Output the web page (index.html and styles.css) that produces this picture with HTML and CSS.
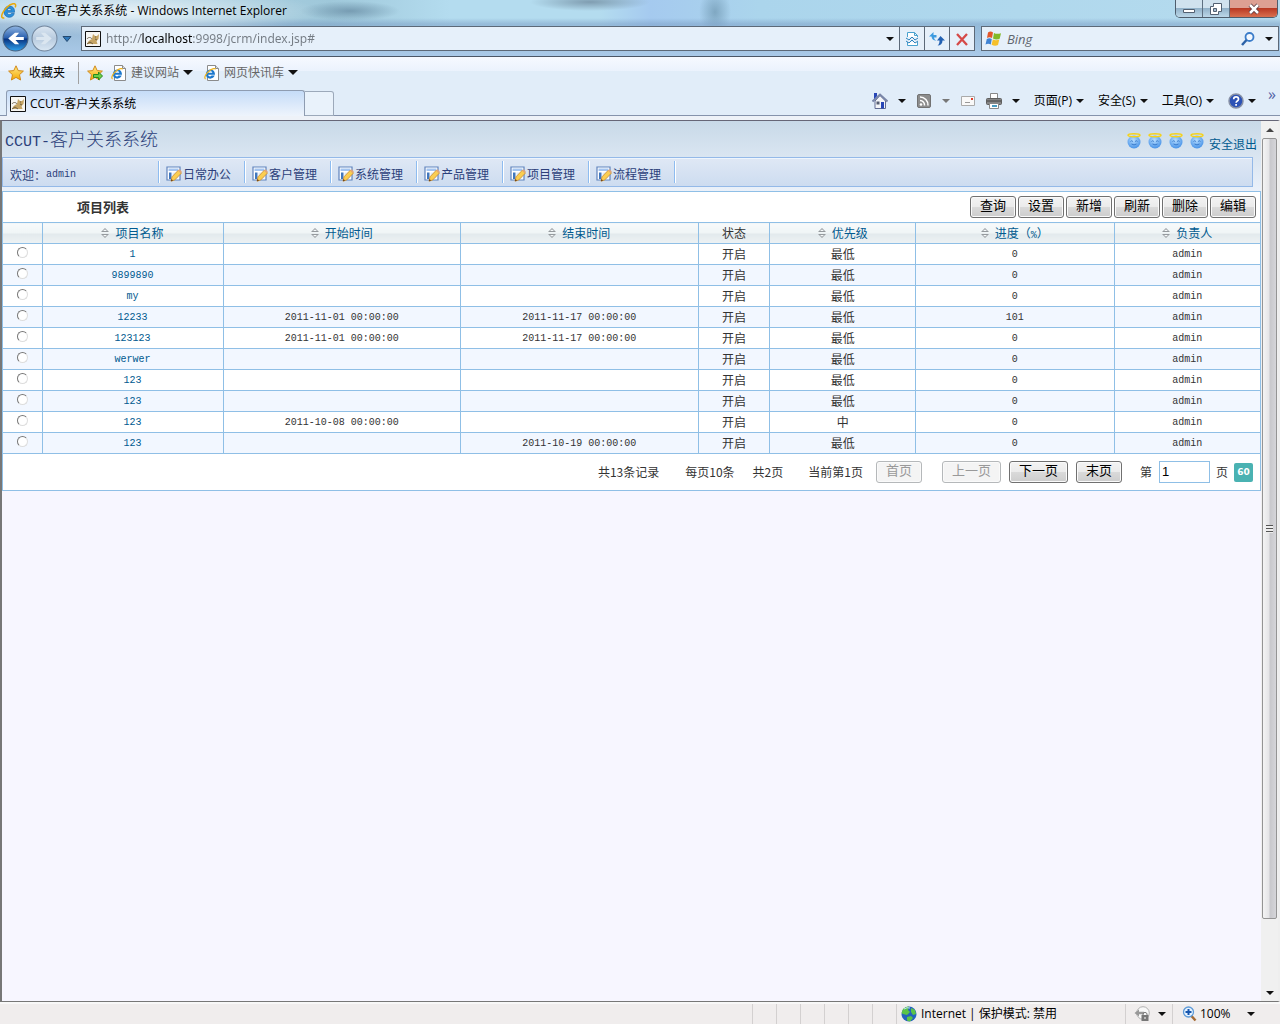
FILE: index.html
```html
<!DOCTYPE html>
<html lang="zh-CN">
<head>
    <meta charset="UTF-8">
    <meta name="viewport" content="width=device-width, initial-scale=1">
    <title>CCUT-客户关系系统</title>
    <link rel="stylesheet" href="styles.css">
</head>
<body>
    <svg class="sprite" aria-hidden="true">
        <defs>
            <linearGradient id="gold" x1="0" y1="0" x2="0" y2="1"><stop offset="0" stop-color="#ffe98a"/><stop offset="1" stop-color="#f5a800"/></linearGradient>
            <linearGradient id="navy" x1="0" y1="0" x2="0" y2="1"><stop offset="0" stop-color="#8fb5e2"/><stop offset=".48" stop-color="#2a5fae"/><stop offset=".52" stop-color="#08327f"/><stop offset="1" stop-color="#2fa2ee"/></linearGradient>
            <linearGradient id="pale" x1="0" y1="0" x2="0" y2="1"><stop offset="0" stop-color="#dce7f2"/><stop offset=".5" stop-color="#b8cbdf"/><stop offset="1" stop-color="#dbe8f4"/></linearGradient>
            <radialGradient id="face" cx=".45" cy=".35" r=".7"><stop offset="0" stop-color="#b5dcff"/><stop offset="1" stop-color="#3f8de6"/></radialGradient>
        </defs>
        <symbol id="ie" viewBox="0 0 16 16">
            <path d="M13.500 9.300H6.100c.1 1.500 1.100 2.300 2.400 2.300.9 0 1.500-.4 1.900-1.100h2.900c-.7 2.400-2.500 3.800-4.900 3.800-3.200 0-5.400-2.300-5.400-5.500s2.200-5.700 5.400-5.700c3.500 0 5.400 2.400 5.100 6.200zM6.200 7.400h4.100c-.1-1.200-.8-2-2-2s-1.900.8-2.100 2z" fill="#2a8fdc" stroke="#1262a8" stroke-width=".6"/>
            <path d="M3.300 14.800C.5 15.700-.2 13 2.100 9.200 4.400 5.300 8.700 1.600 12 .8c2.500-.6 3.200 1.200 2.200 3.600" fill="none" stroke="#e8a90c" stroke-width="1.500"/>
        </symbol>
        <symbol id="iepage" viewBox="0 0 16 16">
            <path d="M3.500.5h8l3 3v12h-11z" fill="#fff" stroke="#8b8b8b"/>
            <path d="M11.500.5v3h3" fill="#ddd" stroke="#8b8b8b"/>
            <path d="M11 9.800H4.200c.2 1.700 2.300 2.300 3.300.8h3.200c-1.400 4.400-9 4.100-8.800-1.500C2.100 3.200 11.200 2.800 11 9.800zM4.300 7.700h4c-.4-1.900-3.500-2-4 0z" fill="#1c78cd"/>
            <path d="M1.600 14C-.6 13 2 8 6.500 5c2-1.300 4.700-2.300 4.700-.5" fill="none" stroke="#f0b41c" stroke-width="1.200"/>
        </symbol>
        <symbol id="cat" viewBox="0 0 16 16">
            <path d="M.5.5h15v15H.5z" fill="#f7f6f2" stroke="#111"/>
            <path d="M2 13c1-3 3-4 5-5l1-5 2 2h2l2-2-.5 5-2 2 1 3H2z" fill="#c6a565"/>
            <path d="M2 8c1-2 4-2 5 0M2 13l3-2 3 2M10 6h1M10 8l2 1" fill="none" stroke="#5d513a" stroke-width=".8"/>
        </symbol>
        <symbol id="star" viewBox="0 0 16 16">
            <path d="M8 .8l2.200 4.800 5.200.5-3.900 3.600 1.100 5.300L8 12.400 3.400 15l1.100-5.300L.6 6.100l5.200-.5z" fill="url(#gold)" stroke="#d18a1c"/>
        </symbol>
        <symbol id="addstar" viewBox="0 0 16 16">
            <use href="#star"/>
            <path d="M6.500 9.500h5V7l4 4-4 4v-2.500h-5z" fill="#6cce48" stroke="#278a1c"/>
        </symbol>
        <symbol id="home" viewBox="0 0 16 16">
            <path d="M3 8v7.500h10.500V8L8 2.500z" fill="#f4f5f8" stroke="#606b91"/>
            <path d="M.5 8.500L8 1.500l7.500 7" fill="none" stroke="#7a86a8" stroke-width="2"/>
            <path d="M2 0h3v3L2 6zM9 9h3v6.500H9z" fill="#2746b6"/><path d="M4.500 8.500h3v3h-3z" fill="#555d70"/>
        </symbol>
        <symbol id="rss" viewBox="0 0 16 16">
            <rect x="1.500" y="1.500" width="13" height="13" rx="1.500" fill="#8d8d8d" stroke="#727272"/>
            <circle cx="5" cy="11.500" r="1.300" fill="#fff"/>
            <path d="M4 7.500a4.500 4.500 0 0 1 4.500 5M4 4a8 8 0 0 1 8 8.500" fill="none" stroke="#fff" stroke-width="1.500"/>
        </symbol>
        <symbol id="mail" viewBox="0 0 16 16">
            <path d="M1.500 3.500h13v9h-13z" fill="#f9f9f9" stroke="#aaa"/><path d="M11 5h2v2h-2z" fill="#e23d2b"/><path d="M5 9.500h5" stroke="#999"/>
        </symbol>
        <symbol id="printer" viewBox="0 0 16 16">
            <path d="M4.500.5h7v5h-7z" fill="#fff" stroke="#888"/>
            <rect x=".5" y="5.500" width="15" height="6" rx="1" fill="#858585" stroke="#5f5f5f"/>
            <path d="M1 8h14" stroke="#444"/><path d="M3.500 10.500h9v5h-9z" fill="#fff" stroke="#888"/><path d="M6 12h5v2H6z" fill="#4a9cc2"/>
        </symbol>
        <symbol id="help" viewBox="0 0 16 16">
            <circle cx="8" cy="8" r="7" fill="#2c52b5" stroke="#8790a5" stroke-width="1.500"/>
            <path d="M5.700 6.200c0-3 4.800-3 4.800 0 0 1.800-2.400 1.700-2.400 3.500M8.100 11v1.800" fill="none" stroke="#fff" stroke-width="1.700"/>
        </symbol>
        <symbol id="compat" viewBox="0 0 16 16">
            <path d="M3.500 6V1.500h7l3 3V6M3.500 11v3.500h10V11M10.500 1.500v3h3" fill="#fff" stroke="#4aa2cf"/>
            <path d="M2 7l3 2 3-3 3 3 3-2M2 10l3 2 3-3 3 3 3-2" fill="none" stroke="#2e83bd"/>
        </symbol>
        <symbol id="refresh" viewBox="0 0 16 16">
            <path d="M0 5.500L4.500 1v3h3v2.500H5c.2 1.500 1 2.500 2.500 3-2.800.3-4.700-1-5-4z" fill="#3e9be0"/>
            <path d="M16 9.500L11.500 5 8 9.500h2.500c0 2.500-.5 4-2 5 3 0 5-1.800 5-5z" fill="#2462b3"/>
        </symbol>
        <symbol id="stop" viewBox="0 0 16 16">
            <path d="M3 3l10 11M13 3L3 14" stroke="#d54a48" stroke-width="2.300"/>
        </symbol>
        <symbol id="flag" viewBox="0 0 16 16">
            <path d="M3 1.500q2.500-1.800 5 0l-1 5.500q-2.500-1.500-5 0z" fill="#e4572a"/><path d="M9 2q3 1.600 7 .2l-1.300 5.500q-3.500 1.500-6.700-.2z" fill="#83b927"/>
            <path d="M1.800 8q2.500-1.500 5 0l-1 5.500q-2.500-1.500-5.300 0z" fill="#3f83d4"/><path d="M7.800 8.500q3 1.600 6.500 0L13 14q-3 1.500-6.400-.2z" fill="#f5c02c"/>
        </symbol>
        <symbol id="search" viewBox="0 0 16 16">
            <circle cx="9.500" cy="6" r="4" fill="#f2f8ff" stroke="#3a7cc9" stroke-width="1.800"/><path d="M6.500 9L2 14" stroke="#2c62a7" stroke-width="2.500"/>
        </symbol>
        <symbol id="edit" viewBox="0 0 16 16">
            <path d="M1 1h13v13H1z" fill="#fff" stroke="#5f83bd" stroke-width="1.200"/>
            <path d="M2.500 2.500h10v2.500h-10z" fill="#a3c4f0"/><path d="M3 6.500h2.500V13H3z" fill="#4177bd"/><path d="M6.500 6.500h6v6h-6z" fill="#e1eaf5"/>
            <path d="M5 15.200l1-4.400L12.500 4l3 3-6.800 7z" fill="#fbce50" stroke="#c98a30" stroke-width=".8"/><path d="M12 4.500l1.500-1.200 2.300 2.300L14.300 7z" fill="#e3a577"/><path d="M5 15.200l.6-2.200 1.400 1.500z" fill="#5a3310"/>
        </symbol>
        <symbol id="angel" viewBox="0 0 14 16">
            <circle cx="7" cy="9" r="6.500" fill="url(#face)"/>
            <ellipse cx="7" cy="2.300" rx="6" ry="1.500" fill="none" stroke="#f5d21b" stroke-width="1.500"/>
            <path d="M3.500 8.500q1.200-1.500 2.400 0M8.100 8.500q1.200-1.500 2.400 0M4.500 11q2.500 1.800 5 0" fill="none" stroke="#3a7bcb"/>
        </symbol>
        <symbol id="globe" viewBox="0 0 16 16">
            <circle cx="8" cy="8" r="7.500" fill="#2463bd"/><path d="M2 3q3-3 6-2.500L7 4l2 2-3 3-4-1-1.500-1zM10 2l4 2 1 4-3 1-2-3zM6 11l4-1 2 2-3 3.500-3-1z" fill="#5bc447"/><path d="M3 3q3-2 6-1" fill="none" stroke="#bfe3ff"/>
        </symbol>
        <symbol id="privacy" viewBox="0 0 16 16">
            <circle cx="9" cy="7" r="6.300" fill="#f8f8f8" stroke="#b1b1b1"/><path d="M.5 7L5 3.500v2.300h5v2.500H5v2.200z" fill="#999"/>
            <path d="M7.500 9h7v6h-7z" fill="#777"/><path d="M9 9V7.500q2-2.500 4 0V9" fill="none" stroke="#777"/><path d="M11 11v2" stroke="#fff"/>
        </symbol>
        <symbol id="zoomin" viewBox="0 0 16 16">
            <path d="M9 9.500l4.500 5" stroke="#a66b34" stroke-width="2.500"/><circle cx="6.500" cy="6" r="5" fill="#e7f3ff" stroke="#5e9bd7" stroke-width="1.300"/><path d="M3.500 6h6M6.500 3v6" stroke="#1656ae" stroke-width="2"/>
        </symbol>
        <symbol id="sort" viewBox="0 0 8 10">
            <path d="M0 4L4 0l4 4zM0 6l4 4 4-4z" fill="#959a9e"/><path d="M2 3.100L4 1.200l2 1.900zM2 6.900l2 1.900 2-1.900z" fill="#f5f8f9"/>
        </symbol>
    </svg>

    <!-- 浏览器窗口 -->
    <header class="glass">
        <div class="titlebar">
            <svg class="icon"><use href="#ie"/></svg>
            <span class="window-title">CCUT-客户关系系统 - Windows Internet Explorer</span>
            <div class="window-buttons">
                <button type="button" class="win-btn" aria-label="最小化"><svg viewBox="0 0 14 14"><path d="M1.500 7.500h11v3h-11z" fill="#fff" stroke="#526071"/></svg></button>
                <button type="button" class="win-btn" aria-label="还原"><svg viewBox="0 0 14 14"><path d="M4.500 1.500h8v8h-3v3h-8v-8h3z" fill="#fff" stroke="#526071"/><path d="M4.500 6.500h3v3h-3z" fill="#a9bfd2" stroke="#526071"/></svg></button>
                <button type="button" class="win-btn win-close" aria-label="关闭"><svg viewBox="0 0 14 14"><path d="M3 3l8 8M11 3l-8 8" stroke="#54343b" stroke-width="4"/><path d="M3 3l8 8M11 3l-8 8" stroke="#fff" stroke-width="2.500"/></svg></button>
            </div>
        </div>
        <div class="navbar">
            <div class="history">
                <button type="button" class="plain" aria-label="后退"><svg class="round" viewBox="0 0 26 26"><circle cx="13" cy="13" r="12" fill="url(#navy)" stroke="#47617f"/><path d="M21 11.500h-8l3.500-4h-4L6 13l6.500 5.500h4l-3.500-4h8z" fill="#fff"/></svg></button>
                <button type="button" class="plain" aria-label="前进"><svg class="round" viewBox="0 0 26 26"><circle cx="13" cy="13" r="12" fill="url(#pale)" stroke="#72869d"/><path d="M5 11.500h8l-3.500-4h4L20 13l-6.500 5.500h-4l3.500-4H5z" fill="#dbe6f0"/></svg></button>
                <button type="button" class="plain" aria-label="最近的页面"><svg class="recent" viewBox="0 0 10 6"><path d="M1 .5h8l-4 5z" fill="#2f78bb" stroke="#24496f"/></svg></button>
            </div>
            <div class="field address">
                <svg class="icon"><use href="#cat"/></svg>
                <input class="url" type="text" aria-label="地址" value="http://localhost:9998/jcrm/index.jsp#">
                <button type="button" class="plain arrow-btn" aria-label="显示地址列表"><span class="arrow"></span></button>
                <button type="button" class="tool" aria-label="兼容性视图"><svg class="icon"><use href="#compat"/></svg></button>
                <button type="button" class="tool" aria-label="刷新页面"><svg class="icon"><use href="#refresh"/></svg></button>
                <button type="button" class="tool" aria-label="停止"><svg class="icon"><use href="#stop"/></svg></button>
            </div>
            <div class="field searchbox">
                <svg class="icon"><use href="#flag"/></svg>
                <input class="bing" type="text" aria-label="搜索" placeholder="Bing">
                <button type="button" class="plain" aria-label="搜索"><svg class="icon"><use href="#search"/></svg></button>
                <button type="button" class="plain arrow-btn" aria-label="搜索选项"><span class="arrow"></span></button>
            </div>
        </div>
    </header>

    <div class="favorites">
        <button type="button" class="plain fav-main"><svg class="icon"><use href="#star"/></svg>收藏夹</button>
        <button type="button" class="plain" aria-label="添加到收藏夹栏"><svg class="icon"><use href="#addstar"/></svg></button>
        <button type="button" class="plain fav-link"><svg class="icon"><use href="#iepage"/></svg>建议网站<span class="arrow big"></span></button>
        <button type="button" class="plain fav-link"><svg class="icon"><use href="#iepage"/></svg>网页快讯库<span class="arrow big"></span></button>
    </div>

    <div class="tabs">
        <button type="button" class="tab"><svg class="icon"><use href="#cat"/></svg>CCUT-客户关系系统</button>
        <button type="button" class="new-tab" aria-label="新选项卡"></button>
        <div class="commands">
            <button type="button" class="plain" aria-label="主页"><svg class="icon"><use href="#home"/></svg><span class="arrow"></span></button>
            <button type="button" class="plain" aria-label="源"><svg class="icon"><use href="#rss"/></svg><span class="arrow gray"></span></button>
            <button type="button" class="plain" aria-label="阅读邮件"><svg class="icon"><use href="#mail"/></svg></button>
            <button type="button" class="plain" aria-label="打印"><svg class="icon"><use href="#printer"/></svg><span class="arrow"></span></button>
            <button type="button" class="plain word">页面(P)<span class="arrow"></span></button>
            <button type="button" class="plain word">安全(S)<span class="arrow"></span></button>
            <button type="button" class="plain word">工具(O)<span class="arrow"></span></button>
            <button type="button" class="plain word" aria-label="帮助"><svg class="icon"><use href="#help"/></svg><span class="arrow"></span></button>
            <button type="button" class="plain more" aria-label="更多">»</button>
        </div>
    </div>

    <div class="viewport">
        <main class="page">
            <div class="banner">
                <div class="banner-top">
                    <h1><span class="latin">CCUT-</span>客户关系系统</h1>
                    <div class="skins">
                        <svg class="angel"><use href="#angel"/></svg>
                        <svg class="angel"><use href="#angel"/></svg>
                        <svg class="angel"><use href="#angel"/></svg>
                        <svg class="angel"><use href="#angel"/></svg>
                        <a href="#" class="logout">安全退出</a>
                    </div>
                </div>
                <nav class="menu">
                    <span class="welcome">欢迎：<span class="latin">admin</span></span>
                    <a href="#"><svg class="icon"><use href="#edit"/></svg>日常办公</a>
                    <a href="#"><svg class="icon"><use href="#edit"/></svg>客户管理</a>
                    <a href="#"><svg class="icon"><use href="#edit"/></svg>系统管理</a>
                    <a href="#"><svg class="icon"><use href="#edit"/></svg>产品管理</a>
                    <a href="#"><svg class="icon"><use href="#edit"/></svg>项目管理</a>
                    <a href="#"><svg class="icon"><use href="#edit"/></svg>流程管理</a>
                </nav>
            </div>

            <div class="list">
                <div class="list-head">
                    <h2>项目列表</h2>
                    <div class="actions">
                        <button type="button" class="btn">查询</button>
                        <button type="button" class="btn">设置</button>
                        <button type="button" class="btn">新增</button>
                        <button type="button" class="btn">刷新</button>
                        <button type="button" class="btn">删除</button>
                        <button type="button" class="btn">编辑</button>
                    </div>
                </div>
                <table>
                    <colgroup>
                        <col class="c-pick"><col class="c-name"><col class="c-date"><col class="c-date"><col class="c-state"><col class="c-level"><col class="c-rate"><col class="c-owner">
                    </colgroup>
                    <thead>
                        <tr>
                            <th></th>
                            <th><a href="#"><svg class="sort"><use href="#sort"/></svg>项目名称</a></th>
                            <th><a href="#"><svg class="sort"><use href="#sort"/></svg>开始时间</a></th>
                            <th><a href="#"><svg class="sort"><use href="#sort"/></svg>结束时间</a></th>
                            <th>状态</th>
                            <th><a href="#"><svg class="sort"><use href="#sort"/></svg>优先级</a></th>
                            <th><a href="#"><svg class="sort"><use href="#sort"/></svg>进度（<span class="latin">%</span>）</a></th>
                            <th><a href="#"><svg class="sort"><use href="#sort"/></svg>负责人</a></th>
                        </tr>
                    </thead>
                    <tbody>
                        <tr><td><input type="radio" name="project" aria-label="1"></td><td class="latin"><a href="#">1</a></td><td></td><td></td><td>开启</td><td>最低</td><td class="latin">0</td><td class="latin">admin</td></tr>
                        <tr><td><input type="radio" name="project" aria-label="9899890"></td><td class="latin"><a href="#">9899890</a></td><td></td><td></td><td>开启</td><td>最低</td><td class="latin">0</td><td class="latin">admin</td></tr>
                        <tr><td><input type="radio" name="project" aria-label="my"></td><td class="latin"><a href="#">my</a></td><td></td><td></td><td>开启</td><td>最低</td><td class="latin">0</td><td class="latin">admin</td></tr>
                        <tr><td><input type="radio" name="project" aria-label="12233"></td><td class="latin"><a href="#">12233</a></td><td class="latin">2011-11-01 00:00:00</td><td class="latin">2011-11-17 00:00:00</td><td>开启</td><td>最低</td><td class="latin">101</td><td class="latin">admin</td></tr>
                        <tr><td><input type="radio" name="project" aria-label="123123"></td><td class="latin"><a href="#">123123</a></td><td class="latin">2011-11-01 00:00:00</td><td class="latin">2011-11-17 00:00:00</td><td>开启</td><td>最低</td><td class="latin">0</td><td class="latin">admin</td></tr>
                        <tr><td><input type="radio" name="project" aria-label="werwer"></td><td class="latin"><a href="#">werwer</a></td><td></td><td></td><td>开启</td><td>最低</td><td class="latin">0</td><td class="latin">admin</td></tr>
                        <tr><td><input type="radio" name="project" aria-label="123"></td><td class="latin"><a href="#">123</a></td><td></td><td></td><td>开启</td><td>最低</td><td class="latin">0</td><td class="latin">admin</td></tr>
                        <tr><td><input type="radio" name="project" aria-label="123"></td><td class="latin"><a href="#">123</a></td><td></td><td></td><td>开启</td><td>最低</td><td class="latin">0</td><td class="latin">admin</td></tr>
                        <tr><td><input type="radio" name="project" aria-label="123"></td><td class="latin"><a href="#">123</a></td><td class="latin">2011-10-08 00:00:00</td><td></td><td>开启</td><td>中</td><td class="latin">0</td><td class="latin">admin</td></tr>
                        <tr><td><input type="radio" name="project" aria-label="123"></td><td class="latin"><a href="#">123</a></td><td></td><td class="latin">2011-10-19 00:00:00</td><td>开启</td><td>最低</td><td class="latin">0</td><td class="latin">admin</td></tr>
                    </tbody>
                </table>
                <div class="pager">
                    <div class="totals"><span>共13条记录</span><span>每页10条</span></div>
                    <span>共2页</span>
                    <div class="totals"><span>当前第1页</span></div>
                    <button type="button" class="btn first" disabled>首页</button>
                    <button type="button" class="btn" disabled>上一页</button>
                    <button type="button" class="btn">下一页</button>
                    <button type="button" class="btn">末页</button>
                    <label class="jump" for="pageNo">第</label>
                    <input type="text" id="pageNo" value="1">
                    <span class="unit">页</span>
                    <button type="button" class="go">60</button>
                </div>
            </div>
        </main>
        <div class="scrollbar">
            <span class="scroll-end"><span class="arrow up"></span></span>
            <span class="thumb"><span class="grip"></span></span>
            <span class="track"></span>
            <span class="scroll-end"><span class="arrow"></span></span>
        </div>
    </div>

    <footer class="status">
        <span class="cell"></span><span class="cell"></span><span class="cell"></span><span class="cell"></span><span class="cell"></span><span class="cell"></span>
        <span class="cell zone"><svg class="icon"><use href="#globe"/></svg>Internet | 保护模式: 禁用</span>
        <button type="button" class="plain cell privacy" aria-label="隐私报告"><svg class="icon"><use href="#privacy"/></svg><span class="arrow"></span></button>
        <button type="button" class="plain cell zoom"><svg class="icon"><use href="#zoomin"/></svg>100%<span class="arrow"></span></button>
    </footer>
</body>
</html>
```

FILE: styles.css
```css
* {
    box-sizing: border-box;
}

body {
    margin: 0;
    height: 100vh;
    display: flex;
    flex-direction: column;
    overflow: hidden;
    background: #f0eded;
    color: #000;
    font: 12px/16px "Open Sans", "Noto Sans CJK SC", sans-serif;
}

button,
input {
    font: inherit;
    color: inherit;
}

a {
    color: #015a8f;
    text-decoration: none;
}

.sprite {
    position: absolute;
    width: 0;
    height: 0;
}

.icon {
    width: 16px;
    height: 16px;
    flex: none;
}

.plain {
    display: flex;
    align-items: center;
    padding: 0;
    border: 0;
    background: none;
    white-space: nowrap;
}

.arrow {
    border: 4px solid transparent;
    border-top-color: #111;
    border-bottom: 0;
}

.arrow.big {
    border-width: 5px 5px 0;
}

.arrow.gray {
    border-top-color: #777;
}

.arrow.up {
    border-top: 0;
    border-bottom: 4px solid #444;
}

/* 标题栏和地址栏 */
.glass {
    flex: none;
    border-bottom: 1px solid #4b5666;
    background:
        radial-gradient(ellipse 190px 24px at 130px 12px, rgba(255, 255, 255, .7), transparent),
        linear-gradient(to bottom, transparent 18px, rgba(120, 155, 195, .5) 24px, rgba(165, 197, 228, .9) 50px, #a9c9e8),
        radial-gradient(ellipse 60px 9px at 590px 2px, rgba(105, 130, 150, .7), transparent),
        radial-gradient(ellipse 16px 24px at 715px 12px, rgba(100, 140, 165, .6), transparent),
        radial-gradient(ellipse 50px 10px at 350px 11px, rgba(90, 125, 150, .6), transparent),
        linear-gradient(to right, #b9d8ea, #9fc8da 330px, #b4dcef 450px, #b4dcef 600px, #a5caef 650px, #abd5ec 760px, #b5dbee);
}

.titlebar {
    display: flex;
    align-items: flex-start;
    gap: 4px;
    height: 25px;
    padding-left: 1px;
}

.titlebar > .icon {
    margin-top: 3px;
}

.window-title {
    flex: 1;
    padding-top: 3px;
}

.window-buttons {
    display: flex;
    height: 18px;
    margin-right: 2px;
    border: 1px solid #4e5d6c;
    border-top: 0;
    border-radius: 0 0 5px 5px;
    overflow: hidden;
}

.win-btn {
    display: flex;
    align-items: center;
    justify-content: center;
    width: 27px;
    padding: 0;
    border: 0;
    border-right: 1px solid #5e7081;
    background: linear-gradient(#d0e2ee 45%, #92b2c9 50%, #bcd7e8);
}

.win-btn svg {
    width: 14px;
    height: 14px;
}

.win-close {
    width: 47px;
    border-right: 0;
    background: linear-gradient(#dda093 45%, #b93a24 50%, #d9704f);
}

.navbar {
    display: flex;
    gap: 6px;
    height: 31px;
    padding: 1px 1px 5px 2px;
}

.history {
    display: flex;
    align-items: center;
    gap: 2px;
    width: 73px;
}

.round {
    width: 27px;
    height: 27px;
    display: block;
}

.recent {
    width: 10px;
    height: 6px;
    margin-left: 2px;
}

.field {
    display: flex;
    align-items: center;
    border: 1px solid #5c6978;
    background: #e6f0fa;
}

.field input {
    flex: 1;
    min-width: 0;
    padding: 0;
    border: 0;
    outline: 0;
}

.address {
    flex: 1;
    padding-left: 3px;
}

/* 域名部分用黑色，其余为灰色 */
.address .url {
    margin-left: 5px;
    color: transparent;
    font: 12px/16px "Noto Sans", sans-serif;
    background: linear-gradient(to right, #747b83 35px, #000 35px, #000 86px, #747b83 86px);
    -webkit-background-clip: text;
    background-clip: text;
}

.arrow-btn {
    padding: 8px 5px;
}

.tool {
    display: flex;
    align-items: center;
    justify-content: center;
    width: 25px;
    height: 23px;
    padding: 0;
    border: 0;
    border-left: 1px solid #5c6978;
    background: none;
}

.searchbox {
    flex: none;
    width: 298px;
    padding-left: 3px;
}

.searchbox .bing {
    margin-left: 6px;
    background: none;
    font-size: 13px;
    font-style: italic;
}

.bing::placeholder {
    color: #5f666e;
}

.searchbox .arrow-btn {
    margin-left: 4px;
}

/* 收藏夹栏 */
.favorites {
    flex: none;
    display: flex;
    align-items: center;
    gap: 8px;
    height: 31px;
    padding-left: 8px;
    background: linear-gradient(#f6f9ff, #ebf2fd 14px, #e1edf9 14px);
}

.fav-main {
    gap: 5px;
    height: 22px;
    padding-right: 13px;
    border-right: 1px solid #a0a0a0;
}

.fav-link {
    gap: 4px;
    margin-right: 3px;
    color: #666;
}

/* 选项卡 */
.tabs {
    flex: none;
    display: flex;
    align-items: flex-end;
    height: 32px;
    padding-left: 6px;
    border-bottom: 4px solid #eef2f8;
    background: #e1edf9;
    box-shadow: inset 0 -1px #8593ac;
}

.tab {
    display: flex;
    align-items: center;
    gap: 4px;
    width: 299px;
    height: 26px;
    padding: 0 3px;
    border: 1px solid #8e9cb1;
    border-bottom: 0;
    border-radius: 3px 3px 0 0;
    background: linear-gradient(#c5dcf8, #eef4fc);
}

.new-tab {
    width: 29px;
    height: 25px;
    border: 1px solid #9ca9ba;
    border-left: 0;
    border-radius: 0 3px 0 0;
    background: #e9f2fb;
}

.commands {
    display: flex;
    align-items: center;
    gap: 10px;
    height: 30px;
    margin-left: auto;
    padding-right: 4px;
}

.commands .plain {
    gap: 10px;
}

.commands .word {
    gap: 4px;
    margin-left: 4px;
}

.commands .more {
    align-self: flex-start;
    margin-left: 2px;
    color: #5363a5;
    font-size: 16px;
}

/* 页面区域 */
.viewport {
    flex: 1;
    min-height: 0;
    display: flex;
    border: 2px solid #777;
    border-width: 1px 2px 1px 2px;
    border-top-color: #667;
    border-right-color: #eee;
}

.page {
    flex: 1;
    min-width: 0;
    background: #f7f6ff;
    color: #333;
    font: 12px/16px "Noto Sans CJK SC", sans-serif;
}

.latin {
    font-family: "Liberation Mono", monospace;
    font-size: 10px;
}

span.latin {
    line-height: 1;
}

.banner {
    padding-bottom: 4px;
    background: linear-gradient(#c8d9e8, #ebf1fa);
}

.banner-top {
    display: flex;
    justify-content: space-between;
    height: 36px;
    padding: 0 4px 0 3px;
}

h1 {
    margin: 0;
    color: #2c3f7a;
    font-size: 18px;
    font-weight: 300;
    line-height: 34px;
}

h1 .latin {
    font-size: 15px;
}

.skins {
    display: flex;
    gap: 7px;
    padding-top: 12px;
}

.angel {
    width: 14px;
    height: 16px;
}

.logout {
    margin-left: -2px;
    padding-top: 3px;
}

.menu {
    display: flex;
    height: 30px;
    margin-right: 8px;
    padding: 3px 0;
    border: 1px solid #94b9e8;
    background: linear-gradient(#dfe8f5, #cddcf0);
    box-shadow: inset 0 1px #eef5fd;
    color: #2c3f7a;
}

.menu > * {
    display: flex;
    align-items: center;
    width: 86px;
    height: 22px;
    border-right: 1px solid #8ebcf0;
    box-shadow: 1px 0 #fff;
    color: inherit;
}

.menu .welcome {
    width: 156px;
    padding: 5px 0 0 7px;
}

.menu a {
    gap: 1px;
    padding: 3px 0 0 7px;
}

/* 项目列表 */
.list {
    border: 1px solid #8fbfe6;
    background: #fff;
}

.list-head {
    display: flex;
    align-items: center;
    justify-content: space-between;
    height: 30px;
    padding: 0 4px 0 74px;
}

h2 {
    margin: 0;
    font-size: 13px;
    line-height: 16px;
}

.actions {
    display: flex;
    gap: 2px;
}

.btn {
    min-width: 46px;
    height: 22px;
    padding: 0 9px 4px;
    border: 1px solid #707070;
    border-radius: 3px;
    background: linear-gradient(#f3f3f3, #ebebeb 50%, #dadada 50%, #cdcdcd);
    box-shadow: inset 0 0 0 1px #fafafa;
    color: #000;
    font-size: 13px;
    line-height: 16px;
}

.btn:disabled {
    border-color: #b5b8ba;
    background: #f4f4f4;
    color: #999;
}

table {
    width: 100%;
    table-layout: fixed;
    border-collapse: collapse;
}

.c-pick { width: 39px; }
.c-name { width: 14.4%; }
.c-date { width: 18.9%; }
.c-state { width: 5.7%; }
.c-level { width: 11.6%; }
.c-rate { width: 15.8%; }

th,
td {
    height: 21px;
    padding: 0;
    border: 1px solid #8fbfe6;
    text-align: center;
    line-height: 16px;
}

td.latin {
    padding-top: 2px;
}

th:first-child,
td:first-child {
    border-left: 0;
}

th:last-child,
td:last-child {
    border-right: 0;
}

th {
    background: linear-gradient(#f7fafb, #eff5f6 50%, #e2e9ec 50%, #edf2f4);
    font-weight: normal;
}

tbody tr:nth-child(even) {
    background: #f2f7ff;
}

.sort {
    width: 8px;
    height: 10px;
    margin-right: 6px;
}

td input {
    appearance: none;
    display: block;
    width: 11px;
    height: 11px;
    margin: 0 auto 3px;
    border: 1px solid #777;
    border-right-color: #ddd;
    border-bottom-color: #ddd;
    border-radius: 50%;
    background: #fff;
}

.pager {
    display: flex;
    align-items: center;
    justify-content: flex-end;
    gap: 8px;
    height: 36px;
    padding-right: 7px;
}

.totals {
    display: flex;
    gap: 26px;
    margin: 0 5px 0 17px;
}

.totals + span {
    margin-left: 5px;
}

.pager .first {
    margin-right: 12px;
}

.jump {
    margin-left: 10px;
}

#pageNo {
    width: 51px;
    height: 22px;
    margin-left: -1px;
    padding: 0 2px 2px;
    border: 1px solid #8fbfe6;
    background: #fff;
    color: #000;
    font: 13px/16px "Liberation Sans", sans-serif;
}

.unit {
    margin: 0 -2px;
}

.go {
    width: 19px;
    height: 19px;
    padding: 0;
    border: 0;
    border-radius: 2px;
    background: #4ab2b2;
    color: #fff;
    font: bold 9px/19px "DejaVu Sans", sans-serif;
}

/* 滚动条 */
.scrollbar {
    flex: none;
    display: flex;
    flex-direction: column;
    width: 17px;
    background: #f0f0f0;
}

.scroll-end {
    display: flex;
    align-items: center;
    justify-content: center;
    height: 17px;
}

.thumb {
    flex: 12;
    display: flex;
    align-items: center;
    justify-content: center;
    margin: 0 1px;
    border: 1px solid #949494;
    border-radius: 2px;
    background: linear-gradient(to right, #f4f4f4, #e5e5e7 45%, #c8c8cc 55%, #d5d5d9);
}

.track {
    flex: 1;
}

.grip {
    width: 7px;
    height: 8px;
    background: repeating-linear-gradient(#555 0, #555 1px, #eee 1px, #eee 3px);
}

/* 状态栏 */
.status {
    flex: none;
    display: flex;
    justify-content: flex-end;
    align-items: center;
    height: 22px;
    border-top: 2px solid #f8f8f8;
    background: #f0eded;
}

.cell {
    display: flex;
    align-items: center;
    width: 24px;
    height: 20px;
    border-left: 1px solid #d3d0d0;
}

.zone {
    gap: 4px;
    width: 229px;
    padding-left: 4px;
}

.privacy {
    gap: 8px;
    width: 47px;
    padding-left: 8px;
}

.zoom {
    gap: 2px;
    width: 108px;
    padding-left: 9px;
}

.zoom .arrow {
    margin-left: 14px;
}
```
